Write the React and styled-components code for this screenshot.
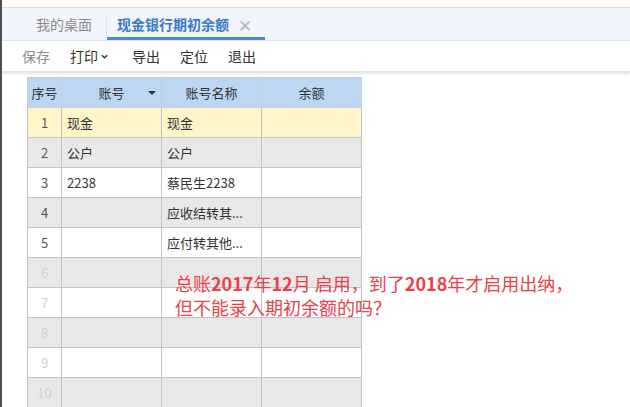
import React from "react"
import styled, { createGlobalStyle } from "styled-components"

const Global = createGlobalStyle`
  html, body {
    margin: 0;
    padding: 0;
    background: #fff;
    font-family: "Noto Sans CJK SC", "Noto Sans", sans-serif;
  }
`

const Page = styled.div`
  position: relative;
  width: 630px;
  height: 407px;
  overflow: hidden;
  border-left: 2px solid #4a4f57;
  box-sizing: border-box;
  background: #fff;
`

const TopStrip = styled.div`
  height: 7px;
  background: #fffdf6;
  border-bottom: 1px solid #d9dee6;
`

const TabBar = styled.div`
  display: flex;
  align-items: stretch;
  height: 32px;
  background: #f2f5fb;
  border-bottom: 1px solid #dce2ea;
  padding-left: 34px;
`

const Tab = styled.div`
  display: flex;
  align-items: center;
  gap: 9px;
  font-size: 14px;
  color: ${({ active }) => (active ? "#3b78c6" : "#8a8a8a")};
  font-weight: ${({ active }) => (active ? 700 : 400)};
  padding: ${({ active }) => (active ? "3px 13px 0 10px" : "3px 14px 0 0")};
  box-sizing: border-box;
  border-bottom: 3px solid ${({ active }) => (active ? "#4a8ada" : "transparent")};
`

const Sep = styled.div`
  width: 1px;
  background: #dde2ea;
  margin: 6px 0 4px;
`

const Close = styled.span`
  color: #b4b8bf;
  font-weight: 300;
  font-size: 17px;
  line-height: 1;
`

const Toolbar = styled.div`
  display: flex;
  align-items: center;
  height: 30px;
  padding-left: 20px;
  gap: 20px;
  background: #fff;
  box-shadow: 0 2px 2px rgba(0, 0, 0, 0.1);
  border-bottom: 1px solid #e4e4e4;
  position: relative;
  z-index: 1;
`

const ToolButton = styled.span`
  font-size: 14px;
  color: ${({ disabled }) => (disabled ? "#8c8c8c" : "#333")};
  display: flex;
  align-items: center;
  gap: 2px;
  margin-right: ${({ menu }) => (menu ? "3px" : "0")};
`

const Content = styled.div`
  padding: 5px 0 0 25px;
`

const Table = styled.table`
  border-collapse: collapse;
  table-layout: fixed;
  width: 335px;
  font-size: 13px;
  color: #333;
`

const Th = styled.th`
  width: ${({ w }) => w - 1}px;
  height: 29px;
  background: #bcd6f4;
  border: 1px solid #c6cdd6;
  font-weight: 400;
  padding: 0;
  position: relative;
`

const Arrow = styled.span`
  position: absolute;
  right: 5px;
  top: 13px;
  width: 0;
  height: 0;
  border-left: 4px solid transparent;
  border-right: 4px solid transparent;
  border-top: 4px solid #333;
`

const Tr = styled.tr`
  background: ${({ bg }) => bg};
`

const Td = styled.td`
  height: 29px;
  border: 1px solid #c2c2c2;
  padding: 0 0 0 5px;
  text-align: left;
  white-space: nowrap;
  overflow: hidden;
`

const NumTd = styled(Td)`
  text-align: center;
  padding: 0;
  color: ${({ dim }) => (dim ? "#cfcfcf" : "#555")};
`

const Note = styled.div`
  position: absolute;
  left: 173px;
  top: 271px;
  font-size: 18px;
  line-height: 24px;
  color: #e8414a;
  z-index: 2;
  b {
    font-weight: 700;
  }
`

const rows = [
  { n: 1, code: "现金", name: "现金" },
  { n: 2, code: "公户", name: "公户" },
  { n: 3, code: "2238", name: "蔡民生2238" },
  { n: 4, code: "", name: "应收结转其..." },
  { n: 5, code: "", name: "应付转其他..." },
  { n: 6 },
  { n: 7 },
  { n: 8 },
  { n: 9 },
  { n: 10 },
]

const rowBg = (n) => (n === 1 ? "#fff5c9" : n % 2 === 0 ? "#e8e8e8" : "#fff")

export default function App() {
  return (
    <>
      <Global />
      <Page>
        <TopStrip />
        <TabBar>
          <Tab>我的桌面</Tab>
          <Sep />
          <Tab active>
            现金银行期初余额
            <Close>✕</Close>
          </Tab>
        </TabBar>
        <Toolbar>
          <ToolButton disabled>保存</ToolButton>
          <ToolButton menu>
            打印
            <svg width="9" height="9" viewBox="0 0 10 10">
              <path d="M2 3.5 L5 6.5 L8 3.5" fill="none" stroke="#333" strokeWidth="1.6" />
            </svg>
          </ToolButton>
          <ToolButton>导出</ToolButton>
          <ToolButton>定位</ToolButton>
          <ToolButton>退出</ToolButton>
        </Toolbar>
        <Content>
          <Table>
            <thead>
              <tr>
                <Th w={34}>序号</Th>
                <Th w={100}>
                  账号
                  <Arrow />
                </Th>
                <Th w={100}>账号名称</Th>
                <Th w={100}>余额</Th>
              </tr>
            </thead>
            <tbody>
              {rows.map((r) => (
                <Tr key={r.n} bg={rowBg(r.n)}>
                  <NumTd dim={r.n > 5}>{r.n}</NumTd>
                  <Td>{r.code}</Td>
                  <Td>{r.name}</Td>
                  <Td />
                </Tr>
              ))}
            </tbody>
          </Table>
        </Content>
        <Note>
          总账<b>2017</b>年<b>12</b>月 启用，到了<b>2018</b>年才启用出纳，
          <br />
          但不能录入期初余额的吗？
        </Note>
      </Page>
    </>
  )
}
